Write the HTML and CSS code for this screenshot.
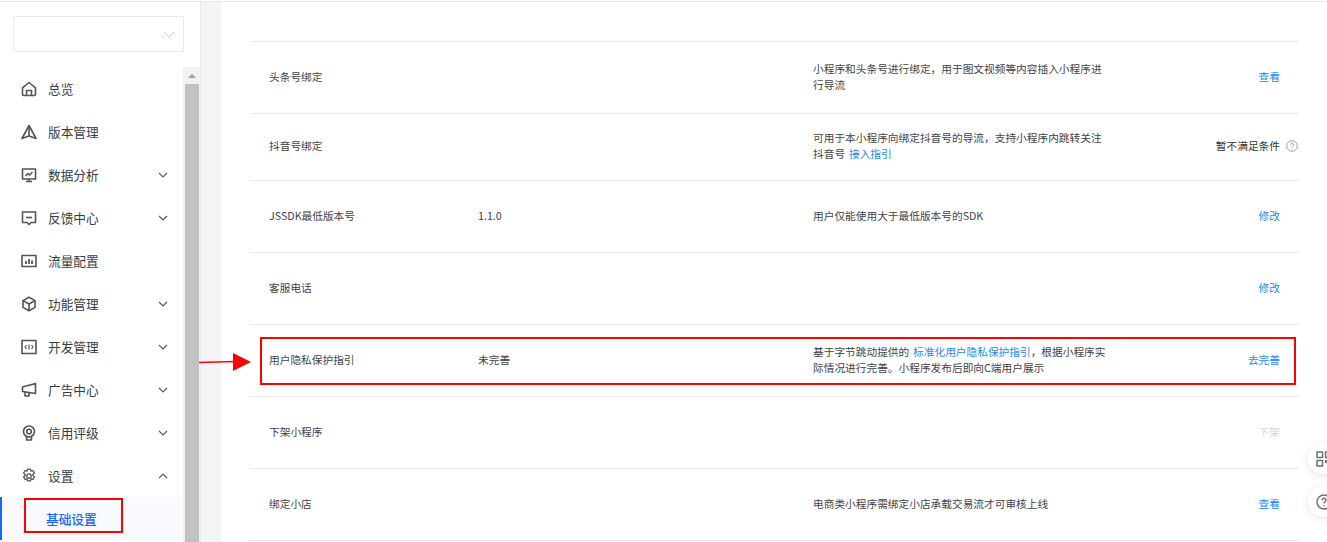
FILE: index.html
```html
<!DOCTYPE html>
<html lang="zh-CN">
<head>
<meta charset="utf-8">
<title>基础设置</title>
<link rel="stylesheet" href="styles.css">
</head>
<body>
<div class="page">
  <aside class="sidebar">
    <div class="select">
      <svg class="select-arrow" viewBox="0 0 12 7"><path d="M1 1l5 5 5-5"/></svg>
    </div>
    <nav class="menu">
      <a class="item"><svg class="icon" viewBox="0 0 16 16"><path d="M1.500 6.800L8 1.500l6.500 5.300v6.700a1 1 0 0 1-1 1h-11a1 1 0 0 1-1-1z"/><path d="M5.500 14.500V9.500h5v5"/></svg><span>总览</span></a>
      <a class="item"><svg class="icon" viewBox="0 0 16 16"><path d="M8 1.500L1 14.500l7-2.500 7 2.500z"/><path d="M8 1.500V12"/></svg><span>版本管理</span></a>
      <a class="item"><svg class="icon" viewBox="0 0 16 16"><path d="M1.500 2h13v10h-13z"/><path d="M4.500 9l2.500-2.500 1.500 1.500 3-3M8 12v2.500M5 14.500h6"/></svg><span>数据分析</span><svg class="chevron" viewBox="0 0 10 6"><path d="M1 1l4 4 4-4"/></svg></a>
      <a class="item"><svg class="icon" viewBox="0 0 16 16"><path d="M1.500 2h13v10.500h-4.500L8 14.500l-2-2H1.500z"/><path d="M5 7.500h6"/></svg><span>反馈中心</span><svg class="chevron" viewBox="0 0 10 6"><path d="M1 1l4 4 4-4"/></svg></a>
      <a class="item"><svg class="icon" viewBox="0 0 16 16"><path d="M1 2.500h14v11H1z"/><path class="thick" d="M5 8v3M8 6v5M11 7.500V11"/></svg><span>流量配置</span></a>
      <a class="item"><svg class="icon" viewBox="0 0 16 16"><path d="M8 1.200l6 3.400v6.800l-6 3.400-6-3.400V4.600z"/><path d="M2 4.600l6 3.400 6-3.400M8 8v6.800"/></svg><span>功能管理</span><svg class="chevron" viewBox="0 0 10 6"><path d="M1 1l4 4 4-4"/></svg></a>
      <a class="item"><svg class="icon" viewBox="0 0 16 16"><path d="M1 1.500h14v13H1z"/><path class="thin" d="M5.500 6L4 8l1.500 2M10.500 6L12 8l-1.500 2M8 5.500v5"/></svg><span>开发管理</span><svg class="chevron" viewBox="0 0 10 6"><path d="M1 1l4 4 4-4"/></svg></a>
      <a class="item"><svg class="icon" viewBox="0 0 16 16"><path d="M1.500 5L14.500 1.500v10L1.500 9.500z"/><path d="M4 10v4h4v-3"/></svg><span>广告中心</span><svg class="chevron" viewBox="0 0 10 6"><path d="M1 1l4 4 4-4"/></svg></a>
      <a class="item"><svg class="icon" viewBox="0 0 16 16"><circle cx="8" cy="6.500" r="5.500"/><circle cx="8" cy="6.500" r="2.300"/><path d="M5.500 12v3h5v-3"/></svg><span>信用评级</span><svg class="chevron" viewBox="0 0 10 6"><path d="M1 1l4 4 4-4"/></svg></a>
      <a class="item"><svg class="icon icon-gear" viewBox="0 0 16 16"><path d="M6.500 1.200h3l.5 2 1.900-.7 1.500 2.600-1.500 1.400v1l1.500 1.400-1.500 2.600-1.900-.7-.5 2h-3l-.5-2-1.900.7-1.500-2.600 1.500-1.400v-1L2.600 5.100l1.500-2.600 1.900.7z"/><circle cx="8" cy="8" r="2.200"/></svg><span>设置</span><svg class="chevron" viewBox="0 0 10 6"><path d="M1 5l4-4 4 4"/></svg></a>
      <a class="subitem"><span>基础设置</span><i class="mark mark-nav"></i></a>
    </nav>
    <div class="scrollbar"><span class="scroll-up"></span><span class="scroll-thumb"></span></div>
  </aside>
  <div class="gutter"></div>
  <main class="main">
    <section class="rows">
      <div class="row">
        <div class="label">头条号绑定</div><div class="value"></div>
        <div class="desc">小程序和头条号进行绑定，用于图文视频等内容插入小程序进行导流</div>
        <div class="action"><a class="link">查看</a></div>
      </div>
      <div class="row row-short">
        <div class="label">抖音号绑定</div><div class="value"></div>
        <div class="desc">可用于本小程序向绑定抖音号的导流，支持小程序内跳转关注抖音号 <a class="link">接入指引</a></div>
        <div class="action action-help"><span>暂不满足条件</span><svg class="help" viewBox="0 0 12 12"><circle cx="6" cy="6" r="5.300"/><path d="M4.500 4.600a1.500 1.500 0 1 1 2.300 1.300c-.6.400-.8.700-.8 1.200M6 8.300v1"/></svg></div>
      </div>
      <div class="row">
        <div class="label">JSSDK最低版本号</div><div class="value">1.1.0</div>
        <div class="desc">用户仅能使用大于最低版本号的SDK</div>
        <div class="action"><a class="link">修改</a></div>
      </div>
      <div class="row">
        <div class="label">客服电话</div><div class="value"></div>
        <div class="desc"></div>
        <div class="action"><a class="link">修改</a></div>
      </div>
      <div class="row">
        <div class="label">用户隐私保护指引</div><div class="value">未完善</div>
        <div class="desc">基于字节跳动提供的 <a class="link">标准化用户隐私保护指引</a>，根据小程序实际情况进行完善。小程序发布后即向C端用户展示</div>
        <div class="action"><a class="link">去完善</a></div>
        <i class="mark mark-row"></i>
        <svg class="pointer" viewBox="0 0 52 20"><path class="pointer-line" d="M0 10.500L36 9.500"/><path class="pointer-head" d="M34 1l18 9-18 9z"/></svg>
      </div>
      <div class="row">
        <div class="label">下架小程序</div><div class="value"></div>
        <div class="desc"></div>
        <div class="action"><span class="disabled">下架</span></div>
      </div>
      <div class="row">
        <div class="label">绑定小店</div><div class="value"></div>
        <div class="desc">电商类小程序需绑定小店承载交易流才可审核上线</div>
        <div class="action"><a class="link">查看</a></div>
      </div>
    </section>
  </main>
  <div class="float float-qr"><svg viewBox="0 0 16 16"><path d="M1 1h5.500v5.500H1zM9.500 1H15v5.500H9.500zM1 9.500h5.500V15H1z"/><path class="float-fill" d="M9 9h3v3H9zM13 13h2.500v2.500H13z"/></svg></div>
  <div class="float float-help"><svg viewBox="0 0 16 16"><circle cx="8" cy="8" r="7"/><path d="M6 6.200a2 2 0 1 1 3.100 1.700c-.8.500-1.100.9-1.100 1.600M8 11v1.200"/></svg></div>
</div>
</body>
</html>
```
FILE: styles.css
```css
* { box-sizing: border-box; }
html, body { margin: 0; height: 100%; overflow: hidden; background: #fff; }
body {
  font-family: "Noto Sans CJK SC", "Liberation Sans", sans-serif;
  color: #333;
  padding-top: 1px;
}
a { text-decoration: none; }
.page {
  position: relative;
  display: flex;
  height: 541px;
  border-top: 1px solid #e8e8ea;
  overflow: hidden;
}

/* sidebar */
.sidebar {
  position: relative;
  flex: 0 0 201px;
  border-right: 1px solid #e6e8ec;
  padding-top: 14px;
}
.select {
  display: flex;
  align-items: center;
  justify-content: flex-end;
  width: 171px;
  height: 36px;
  margin-left: 13px;
  padding-right: 8px;
  border: 1px solid #e8eaee;
  border-radius: 2px;
}
.select-arrow { width: 12px; height: 7px; fill: none; stroke: #ccd0d6; stroke-width: 1; }
.menu { margin-top: 15px; width: 183px; }
.item {
  display: flex;
  align-items: center;
  height: 43px;
  padding-left: 21px;
  font-size: 12.700px;
  color: #393c42;
}
.icon { width: 16px; height: 16px; margin-right: 11px; fill: none; stroke: #50545c; stroke-width: 1.600; stroke-linejoin: round; }
.icon .thick { stroke-width: 1.800; }
.icon .thin { stroke-width: 1.200; }
.icon-gear { stroke-width: 1.300; }
.item span { flex: 1; margin-top: -1px; }
.chevron { width: 10px; height: 6px; margin-right: 15px; fill: none; stroke: #50545c; stroke-width: 1.100; }
.subitem {
  position: relative;
  display: flex;
  align-items: center;
  height: 43px;
  padding-left: 44px;
  font-size: 12.700px;
  font-weight: 500;
  color: #1966ff;
  background: #f8fafd;
  border-left: 2px solid #1966ff;
}
.subitem span { margin-top: -1px; }
.scrollbar {
  position: absolute;
  top: 65px;
  left: 183px;
  bottom: 0;
  width: 17px;
  padding: 0 1px 0 2px;
  background: #f1f1f1;
  display: flex;
  flex-direction: column;
}
.scroll-up {
  flex: 0 0 17px;
  display: flex;
  justify-content: center;
  align-items: center;
}
.scroll-up::before {
  content: "";
  border-left: 4px solid transparent;
  border-right: 4px solid transparent;
  border-bottom: 4px solid #a3a3a3;
}
.scroll-thumb { flex: 1; background: #c1c1c1; }

.gutter { flex: 0 0 20px; background: #f3f4f6; }

/* main */
.main { flex: 1; padding: 39px 28px 0 29px; min-width: 0; }
.rows { border-bottom: 1px solid #ebebeb; }
.row {
  position: relative;
  display: grid;
  grid-template-columns: 209px 335px 295px 1fr;
  align-items: center;
  height: 72px;
  padding: 0 19px 2px;
  border-top: 1px solid #ebebeb;
  font-size: 10.700px;
  line-height: 16px;
}
.row-short { height: 67px; }
.label, .value, .desc { color: #3f4247; }
.desc { word-break: break-all; word-spacing: 1.500px; }
.action { display: flex; justify-content: flex-end; }
.action-help { position: relative; color: #333; }
.link { color: #1e88f5; }
.disabled { color: #d6d6d6; }
.help {
  position: absolute;
  right: -18px;
  top: 2px;
  width: 12px;
  height: 12px;
  fill: none;
  stroke: #a0a3a8;
  stroke-width: 1;
}

/* annotations */
.mark { position: absolute; border: 2px solid #f00; pointer-events: none; }
.mark-row { left: 10px; top: 12px; width: 1036px; height: 48px; }
.mark-nav { left: 22px; top: 1px; width: 99px; height: 35px; }
.pointer { position: absolute; left: -51px; top: 27px; width: 52px; height: 20px; overflow: visible; }
.pointer-line { stroke: #f00; stroke-width: 1.500; fill: none; }
.pointer-head { fill: #f00; }

/* floating buttons */
.float {
  position: absolute;
  left: 1308px;
  width: 30px;
  height: 30px;
  border-radius: 50%;
  background: #fff;
  box-shadow: 0 2px 10px rgba(0, 0, 0, .1);
  padding: 7px 0 0 8px;
}
.float svg { display: block; width: 16px; height: 16px; fill: none; stroke: #6f7278; stroke-width: 1.500; }
.float-fill { fill: #6f7278; stroke: none; }
.float-qr { top: 442px; }
.float-help { top: 485px; }
```
